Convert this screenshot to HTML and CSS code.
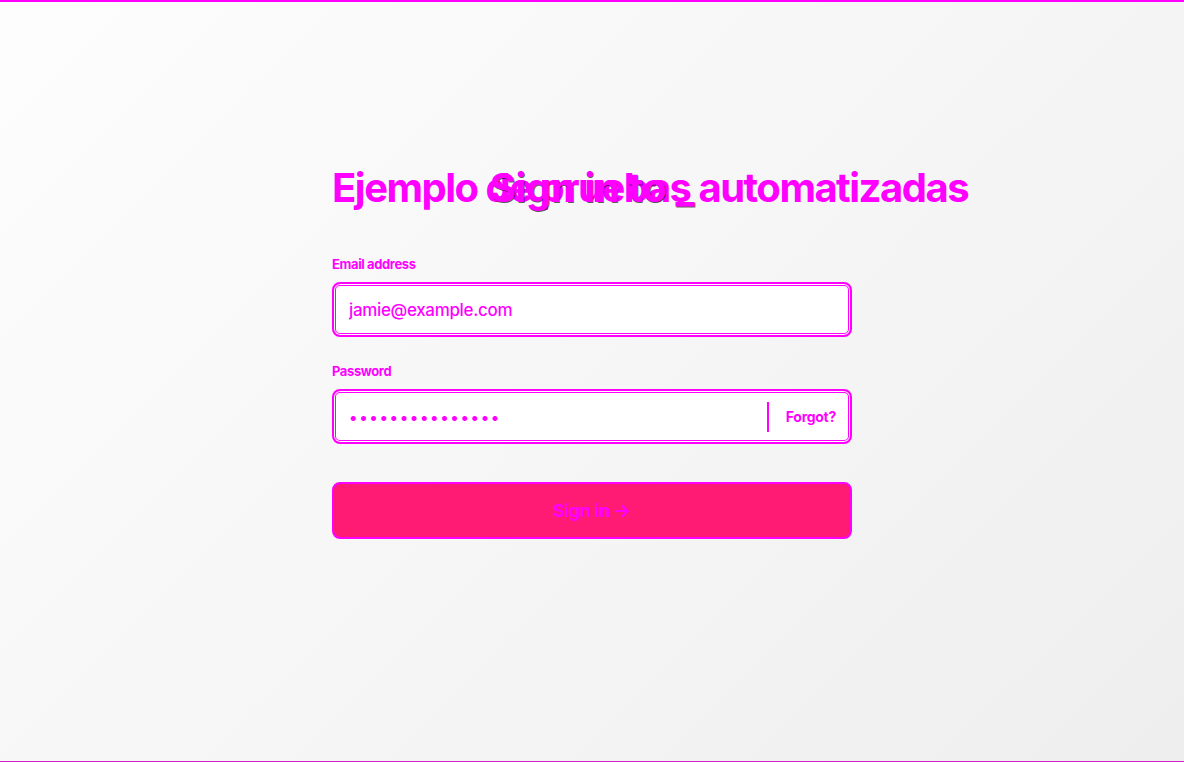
FILE: index.html
```html
<!DOCTYPE html>
<html lang="es">
<head>
<meta charset="utf-8">
<title>Ejemplo de pruebas automatizadas</title>
<link rel="stylesheet" href="styles.css">
</head>
<body>
<main class="page">
  <form class="card" onsubmit="return false">
    <div class="heading">
      <h1 class="title">Ejemplo de pruebas automatizadas</h1>
      <span class="subtitle">Sign in to _</span>
    </div>
    <label class="label" for="email">Email address</label>
    <div class="field">
      <input id="email" class="input" type="email" value="jamie@example.com">
    </div>
    <label class="label label-pw" for="pw">Password</label>
    <div class="field">
      <input id="pw" class="input input-pw" type="password" value="aaaaaaaaaaaaaaa">
      <span class="divider"></span>
      <a class="forgot" href="#">Forgot?</a>
    </div>
    <button class="btn" type="submit">Sign in →</button>
  </form>
</main>
</body>
</html>
```
FILE: styles.css
```css
* { box-sizing: border-box; }
html, body { margin: 0; height: 100%; }
body {
  font-family: Inter, "Noto Sans", sans-serif;
  background: linear-gradient(135deg, #fdfdfd 0%, #f6f6f6 50%, #eeeeee 100%);
  border-top: 2px solid #ff00ff;
  border-bottom: 1px solid #cc22cc;
  overflow: hidden;
}
.page {
  height: 100%;
  display: flex;
  justify-content: center;
  padding-top: 162px;
}
.card {
  width: 520px;
  display: flex;
  flex-direction: column;
}
.heading {
  position: relative;
  height: 50px;
  margin-bottom: 42px;
}
.title {
  margin: 0;
  font-size: 40px;
  font-weight: 700;
  letter-spacing: -1.5px;
  line-height: 48px;
  color: #ff00ff;
  white-space: nowrap;
}
.subtitle {
  position: absolute;
  left: 0;
  right: 0;
  top: 0;
  text-align: center;
  font-size: 40px;
  font-weight: 700;
  letter-spacing: -0.01em;
  line-height: 48px;
  color: #ff00ff;
  text-shadow: 0.6px 0.6px 0 rgba(20, 20, 20, 0.7);
}
.label {
  font-size: 13px;
  font-weight: 700;
  color: #ff00ff;
  letter-spacing: -0.03em;
  line-height: 16px;
  margin-bottom: 10px;
}
.label-pw { margin-top: 26px; }
.field {
  height: 55px;
  border: 2px solid #ff00ff;
  border-radius: 8px;
  background: #ffffff;
  box-shadow: inset 0 0 0 1px #ffffff, inset 0 0 0 2px #ff00ff;
  display: flex;
  align-items: center;
  padding: 0 14px 0 15px;
}
.input {
  flex: 1;
  border: 0;
  outline: 0;
  background: transparent;
  font-family: Inter, "Noto Sans", sans-serif;
  font-size: 17px;
  font-weight: 500;
  color: #ff00ff;
  padding: 0;
  letter-spacing: -0.02em;
}
.input-pw { letter-spacing: 1.6px; font-size: 16px; }
.divider {
  width: 2px;
  height: 30px;
  background: #ff00ff;
  margin: 0 17px 0 0;
}
.forgot {
  font-size: 14px;
  font-weight: 700;
  color: #ff00ff;
  text-decoration: none;
  letter-spacing: -0.02em;
}
.btn {
  margin-top: 38px;
  height: 57px;
  border: 2px solid #ff00ff;
  border-radius: 8px;
  background: #ff1b74;
  color: #ff00ff;
  font-family: Inter, "Noto Sans", sans-serif;
  font-size: 18px;
  font-weight: 700;
  letter-spacing: -0.02em;
  cursor: pointer;
}
```
